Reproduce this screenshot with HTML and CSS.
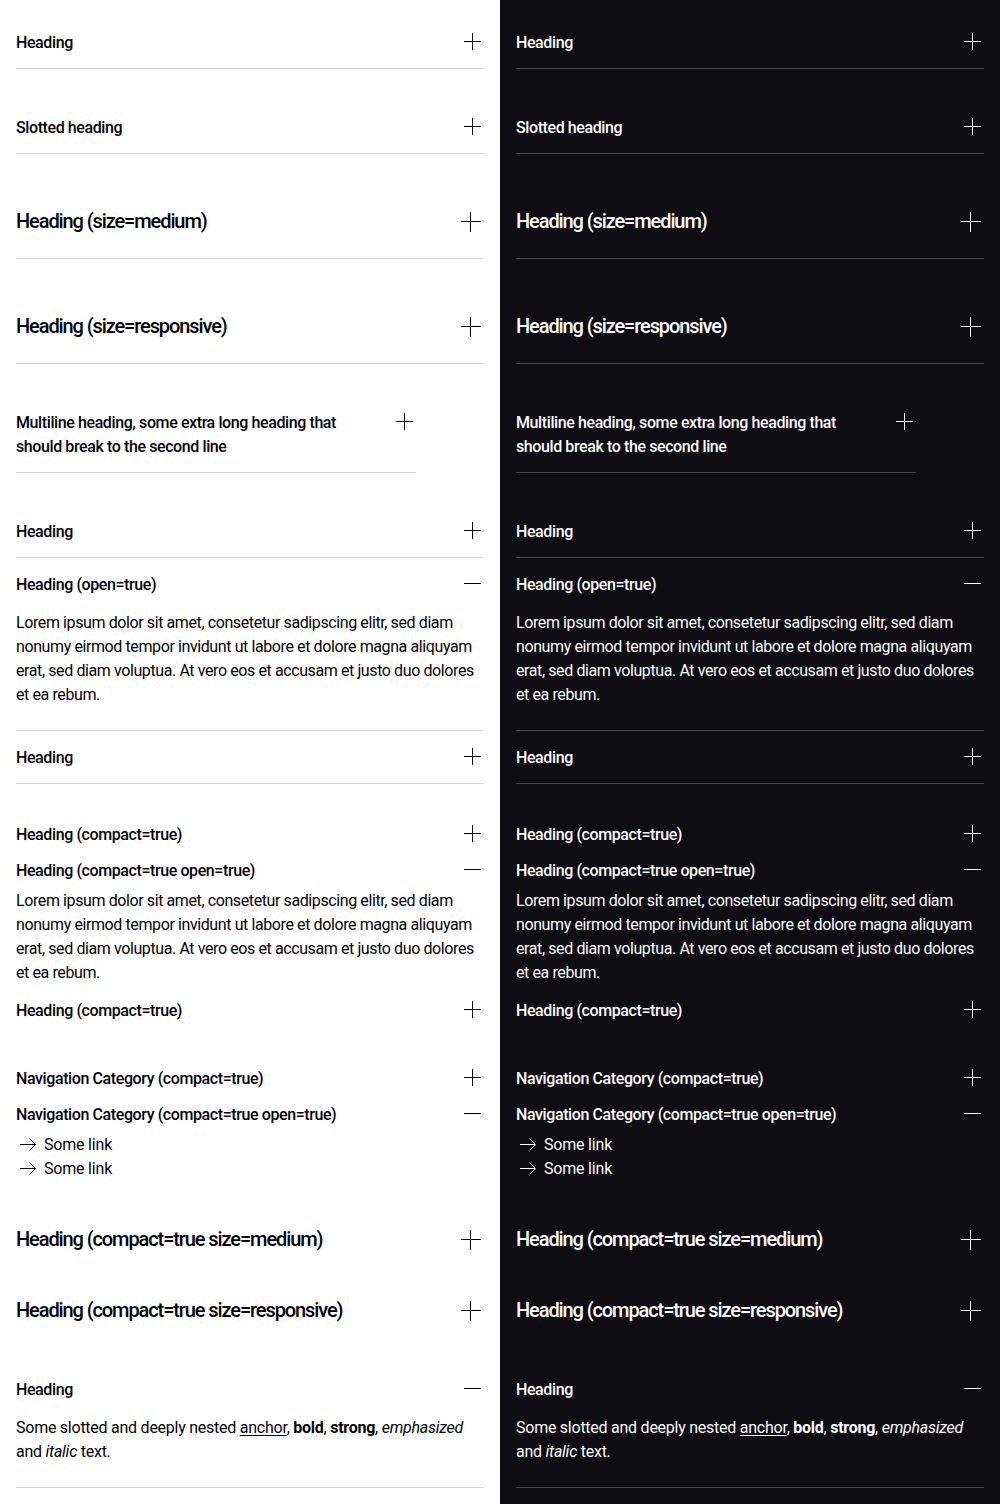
FILE: index.html
```html
<!DOCTYPE html>
<html lang="en">
<head>
<meta charset="utf-8">
<title>Accordion</title>
<link rel="stylesheet" href="styles.css">
</head>
<body>
<div class="page">
  <!-- LIGHT THEME -->
  <div class="col theme-light">
    <div class="group">
      <div class="acc">
        <div class="acc-head"><span class="acc-title">Heading</span><svg class="icon" viewBox="0 0 24 24"><path d="M12.5 3v17M4 11.5h17"/></svg></div>
      </div>
    </div>
    <div class="group">
      <div class="acc">
        <div class="acc-head"><span class="acc-title">Slotted heading</span><svg class="icon" viewBox="0 0 24 24"><path d="M12.5 3v17M4 11.5h17"/></svg></div>
      </div>
    </div>
    <div class="group">
      <div class="acc medium">
        <div class="acc-head"><span class="acc-title">Heading (size=medium)</span><svg class="icon" viewBox="0 0 28 28"><path d="M14.5 4.5v20M4.5 14.5h20"/></svg></div>
      </div>
    </div>
    <div class="group">
      <div class="acc medium">
        <div class="acc-head"><span class="acc-title">Heading (size=responsive)</span><svg class="icon" viewBox="0 0 28 28"><path d="M14.5 4.5v20M4.5 14.5h20"/></svg></div>
      </div>
    </div>
    <div class="group narrow">
      <div class="acc">
        <div class="acc-head"><span class="acc-title">Multiline heading, some extra long heading that should break to the second line</span><svg class="icon" viewBox="0 0 24 24"><path d="M12.5 3v17M4 11.5h17"/></svg></div>
      </div>
    </div>
    <div class="group">
      <div class="acc">
        <div class="acc-head"><span class="acc-title">Heading</span><svg class="icon" viewBox="0 0 24 24"><path d="M12.5 3v17M4 11.5h17"/></svg></div>
      </div>
      <div class="acc open">
        <div class="acc-head"><span class="acc-title">Heading (open=true)</span><svg class="icon" viewBox="0 0 24 24"><path d="M4 11.5h17"/></svg></div>
        <div class="acc-body">Lorem ipsum dolor sit amet, consetetur sadipscing elitr, sed diam nonumy eirmod tempor invidunt ut labore et dolore magna aliquyam erat, sed diam voluptua. At vero eos et accusam et justo duo dolores et ea rebum.</div>
      </div>
      <div class="acc">
        <div class="acc-head"><span class="acc-title">Heading</span><svg class="icon" viewBox="0 0 24 24"><path d="M12.5 3v17M4 11.5h17"/></svg></div>
      </div>
    </div>
    <div class="group">
      <div class="acc compact">
        <div class="acc-head"><span class="acc-title">Heading (compact=true)</span><svg class="icon" viewBox="0 0 24 24"><path d="M12.5 3v17M4 11.5h17"/></svg></div>
      </div>
      <div class="acc compact open">
        <div class="acc-head"><span class="acc-title">Heading (compact=true open=true)</span><svg class="icon" viewBox="0 0 24 24"><path d="M4 11.5h17"/></svg></div>
        <div class="acc-body">Lorem ipsum dolor sit amet, consetetur sadipscing elitr, sed diam nonumy eirmod tempor invidunt ut labore et dolore magna aliquyam erat, sed diam voluptua. At vero eos et accusam et justo duo dolores et ea rebum.</div>
      </div>
      <div class="acc compact">
        <div class="acc-head"><span class="acc-title">Heading (compact=true)</span><svg class="icon" viewBox="0 0 24 24"><path d="M12.5 3v17M4 11.5h17"/></svg></div>
      </div>
    </div>
    <div class="group">
      <div class="acc compact">
        <div class="acc-head"><span class="acc-title">Navigation Category (compact=true)</span><svg class="icon" viewBox="0 0 24 24"><path d="M12.5 3v17M4 11.5h17"/></svg></div>
      </div>
      <div class="acc compact open nav">
        <div class="acc-head"><span class="acc-title">Navigation Category (compact=true open=true)</span><svg class="icon" viewBox="0 0 24 24"><path d="M4 11.5h17"/></svg></div>
        <div class="acc-body">
          <a class="link" href="#"><svg class="link-icon" viewBox="0 0 24 24"><path d="M4 12.5h15.5M13.5 6.5l6 6-6 6"/></svg><span>Some link</span></a>
          <a class="link" href="#"><svg class="link-icon" viewBox="0 0 24 24"><path d="M4 12.5h15.5M13.5 6.5l6 6-6 6"/></svg><span>Some link</span></a>
        </div>
      </div>
    </div>
    <div class="group">
      <div class="acc compact medium">
        <div class="acc-head"><span class="acc-title">Heading (compact=true size=medium)</span><svg class="icon" viewBox="0 0 28 28"><path d="M14.5 4.5v20M4.5 14.5h20"/></svg></div>
      </div>
    </div>
    <div class="group">
      <div class="acc compact medium">
        <div class="acc-head"><span class="acc-title">Heading (compact=true size=responsive)</span><svg class="icon" viewBox="0 0 28 28"><path d="M14.5 4.5v20M4.5 14.5h20"/></svg></div>
      </div>
    </div>
    <div class="group">
      <div class="acc open">
        <div class="acc-head"><span class="acc-title">Heading</span><svg class="icon" viewBox="0 0 24 24"><path d="M4 11.5h17"/></svg></div>
        <div class="acc-body rich">Some slotted and deeply nested <a class="anchor" href="#">anchor</a>, <b>bold</b>, <strong>strong</strong>, <em>emphasized</em> and <i>italic</i> text.</div>
      </div>
    </div>
  </div>

  <!-- DARK THEME -->
  <div class="col theme-dark">
    <div class="group">
      <div class="acc">
        <div class="acc-head"><span class="acc-title">Heading</span><svg class="icon" viewBox="0 0 24 24"><path d="M12.5 3v17M4 11.5h17"/></svg></div>
      </div>
    </div>
    <div class="group">
      <div class="acc">
        <div class="acc-head"><span class="acc-title">Slotted heading</span><svg class="icon" viewBox="0 0 24 24"><path d="M12.5 3v17M4 11.5h17"/></svg></div>
      </div>
    </div>
    <div class="group">
      <div class="acc medium">
        <div class="acc-head"><span class="acc-title">Heading (size=medium)</span><svg class="icon" viewBox="0 0 28 28"><path d="M14.5 4.5v20M4.5 14.5h20"/></svg></div>
      </div>
    </div>
    <div class="group">
      <div class="acc medium">
        <div class="acc-head"><span class="acc-title">Heading (size=responsive)</span><svg class="icon" viewBox="0 0 28 28"><path d="M14.5 4.5v20M4.5 14.5h20"/></svg></div>
      </div>
    </div>
    <div class="group narrow">
      <div class="acc">
        <div class="acc-head"><span class="acc-title">Multiline heading, some extra long heading that should break to the second line</span><svg class="icon" viewBox="0 0 24 24"><path d="M12.5 3v17M4 11.5h17"/></svg></div>
      </div>
    </div>
    <div class="group">
      <div class="acc">
        <div class="acc-head"><span class="acc-title">Heading</span><svg class="icon" viewBox="0 0 24 24"><path d="M12.5 3v17M4 11.5h17"/></svg></div>
      </div>
      <div class="acc open">
        <div class="acc-head"><span class="acc-title">Heading (open=true)</span><svg class="icon" viewBox="0 0 24 24"><path d="M4 11.5h17"/></svg></div>
        <div class="acc-body">Lorem ipsum dolor sit amet, consetetur sadipscing elitr, sed diam nonumy eirmod tempor invidunt ut labore et dolore magna aliquyam erat, sed diam voluptua. At vero eos et accusam et justo duo dolores et ea rebum.</div>
      </div>
      <div class="acc">
        <div class="acc-head"><span class="acc-title">Heading</span><svg class="icon" viewBox="0 0 24 24"><path d="M12.5 3v17M4 11.5h17"/></svg></div>
      </div>
    </div>
    <div class="group">
      <div class="acc compact">
        <div class="acc-head"><span class="acc-title">Heading (compact=true)</span><svg class="icon" viewBox="0 0 24 24"><path d="M12.5 3v17M4 11.5h17"/></svg></div>
      </div>
      <div class="acc compact open">
        <div class="acc-head"><span class="acc-title">Heading (compact=true open=true)</span><svg class="icon" viewBox="0 0 24 24"><path d="M4 11.5h17"/></svg></div>
        <div class="acc-body">Lorem ipsum dolor sit amet, consetetur sadipscing elitr, sed diam nonumy eirmod tempor invidunt ut labore et dolore magna aliquyam erat, sed diam voluptua. At vero eos et accusam et justo duo dolores et ea rebum.</div>
      </div>
      <div class="acc compact">
        <div class="acc-head"><span class="acc-title">Heading (compact=true)</span><svg class="icon" viewBox="0 0 24 24"><path d="M12.5 3v17M4 11.5h17"/></svg></div>
      </div>
    </div>
    <div class="group">
      <div class="acc compact">
        <div class="acc-head"><span class="acc-title">Navigation Category (compact=true)</span><svg class="icon" viewBox="0 0 24 24"><path d="M12.5 3v17M4 11.5h17"/></svg></div>
      </div>
      <div class="acc compact open nav">
        <div class="acc-head"><span class="acc-title">Navigation Category (compact=true open=true)</span><svg class="icon" viewBox="0 0 24 24"><path d="M4 11.5h17"/></svg></div>
        <div class="acc-body">
          <a class="link" href="#"><svg class="link-icon" viewBox="0 0 24 24"><path d="M4 12.5h15.5M13.5 6.5l6 6-6 6"/></svg><span>Some link</span></a>
          <a class="link" href="#"><svg class="link-icon" viewBox="0 0 24 24"><path d="M4 12.5h15.5M13.5 6.5l6 6-6 6"/></svg><span>Some link</span></a>
        </div>
      </div>
    </div>
    <div class="group">
      <div class="acc compact medium">
        <div class="acc-head"><span class="acc-title">Heading (compact=true size=medium)</span><svg class="icon" viewBox="0 0 28 28"><path d="M14.5 4.5v20M4.5 14.5h20"/></svg></div>
      </div>
    </div>
    <div class="group">
      <div class="acc compact medium">
        <div class="acc-head"><span class="acc-title">Heading (compact=true size=responsive)</span><svg class="icon" viewBox="0 0 28 28"><path d="M14.5 4.5v20M4.5 14.5h20"/></svg></div>
      </div>
    </div>
    <div class="group">
      <div class="acc open">
        <div class="acc-head"><span class="acc-title">Heading</span><svg class="icon" viewBox="0 0 24 24"><path d="M4 11.5h17"/></svg></div>
        <div class="acc-body rich">Some slotted and deeply nested <a class="anchor" href="#">anchor</a>, <b>bold</b>, <strong>strong</strong>, <em>emphasized</em> and <i>italic</i> text.</div>
      </div>
    </div>
  </div>
</div>
</body>
</html>
```
FILE: styles.css
```css
* { box-sizing: border-box; }

html, body {
  margin: 0;
  padding: 0;
}

body {
  font-family: Roboto, "Liberation Sans", Arial, sans-serif;
  font-size: 16px;
  line-height: 24px;
}

.page {
  display: grid;
  grid-template-columns: 500px 500px;
  min-height: 1504px;
}

.col {
  display: flex;
  flex-direction: column;
  gap: 32px;
  padding: 16px;
}

.theme-light {
  background: #ffffff;
  color: #010205;
  --divider: #d8d8db;
}

.theme-dark {
  background: #0e0e12;
  color: #fbfcff;
  --divider: #48484d;
}

.group {
  display: flex;
  flex-direction: column;
}

.group.narrow {
  max-width: 400px;
}

.acc {
  border-bottom: 1px solid var(--divider);
}

.acc.compact {
  border-bottom: none;
}

.acc-head {
  display: flex;
  align-items: flex-start;
  gap: 24px;
  padding: 15px 0 13px;
  font-weight: 500;
  font-size: 16px;
  line-height: 24px;
  letter-spacing: -0.4px;
}

.acc-title {
  flex: 1 1 auto;
  min-width: 0;
}

.icon {
  flex: 0 0 24px;
  width: 24px;
  height: 24px;
  margin-top: -1px;
  fill: none;
  stroke: currentColor;
  stroke-width: 1;
  shape-rendering: crispEdges;
}

.acc.medium .acc-head {
  padding: 20px 0 22px;
  font-size: 20px;
  line-height: 30px;
  letter-spacing: -1.1px;
}

.acc.medium .icon {
  flex: 0 0 28px;
  width: 28px;
  height: 28px;
  margin-top: 1px;
}

.acc.compact .acc-head {
  padding: 7px 0 5px;
}

.acc.compact.medium .acc-head {
  padding: 3px 0 6px;
}

.acc-body {
  padding: 1px 0 23px;
  font-weight: 400;
  letter-spacing: -0.4px;
}

.acc-body.rich {
  letter-spacing: -0.25px;
}

.acc.compact .acc-body {
  padding-bottom: 7px;
}

.acc.compact.nav .acc-body {
  padding-bottom: 8px;
  display: flex;
  flex-direction: column;
  align-items: flex-start;
}

.link {
  display: flex;
  align-items: flex-start;
  gap: 4px;
  color: inherit;
  text-decoration: none;
  letter-spacing: -0.2px;
}

.link-icon {
  width: 24px;
  height: 24px;
  margin-top: -1px;
  fill: none;
  stroke: currentColor;
  stroke-width: 1;
}

.anchor {
  color: inherit;
  text-decoration: underline;
  text-decoration-thickness: 1px;
  text-underline-offset: 2px;
}

.acc-body b,
.acc-body strong {
  font-weight: 700;
}
```
